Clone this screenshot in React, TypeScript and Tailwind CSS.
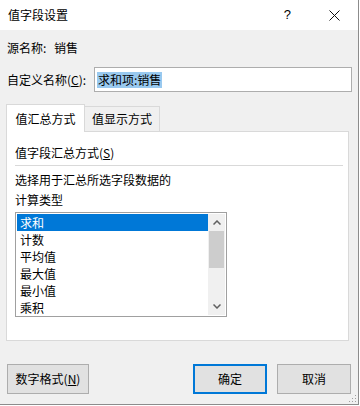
import React from "react";

const items = ["求和", "计数", "平均值", "最大值", "最小值", "乘积"];

export default function App() {
  return (
    <div className="w-[360px] h-[406px] bg-white text-[12px] leading-[16px] text-black font-['Microsoft_YaHei','Noto_Sans_CJK_SC',sans-serif]">
      <div className="relative flex h-[405px] w-[359px] flex-col border-r border-b border-[#8c8c8c] bg-[#f0f0f0]">
        {/* title bar */}
        <div className="flex h-[30px] items-center bg-white pl-[8px]">
          <span className="text-[12px]">值字段设置</span>
          <span className="ml-auto mr-[38px] font-['Liberation_Sans',sans-serif] text-[13px]">?</span>
          <svg width="11" height="11" viewBox="0 0 11 11" className="mr-[18px]">
            <path d="M0.5 0.5 L10.5 10.5 M10.5 0.5 L0.5 10.5" stroke="#111" strokeWidth="1" />
          </svg>
        </div>

        <div className="px-[6px]">
          {/* source name */}
          <div className="mt-[10px] flex h-[16px] pl-[1px]">
            <span className="w-[47px]">源名称:</span>
            <span>销售</span>
          </div>

          {/* custom name */}
          <div className="mt-[11px] flex h-[25px] items-center pl-[1px]">
            <span className="w-[87px]">
              自定义名称(<span className="underline">C</span>):
            </span>
            <div className="flex h-[25px] w-[258px] items-center border border-[#adadad] bg-white pl-[2px]">
              <span className="bg-[#99c9ef] px-[1px]">求和项:销售</span>
            </div>
          </div>

          {/* tabs */}
          <div className="mt-[12px] flex h-[27px] items-end">
            <div className="relative z-10 -mb-px flex h-[28px] w-[79px] items-center justify-center border border-b-0 border-[#d9d9d9] bg-white">
              值汇总方式
            </div>
            <div className="flex h-[25px] w-[75px] items-center justify-center border border-l-0 border-b-0 border-[#d9d9d9] bg-[#f0f0f0]">
              值显示方式
            </div>
          </div>

          {/* panel */}
          <div className="h-[210px] w-[343px] border border-[#d9d9d9] bg-white pl-[8px] pr-[5px]">
            <div className="mt-[13px] h-[16px]">
              值字段汇总方式(<span className="underline">S</span>)
            </div>
            <div className="mt-[4px] h-px bg-[#d9d9d9]" />
            <div className="mt-[6px] h-[16px]">选择用于汇总所选字段数据的</div>
            <div className="mt-[4px] h-[16px]">计算类型</div>

            {/* list box */}
            <div className="mt-[4px] flex h-[105px] w-[212px] border border-[#a0a0a0] bg-white p-px">
              <div className="flex-1 overflow-hidden">
                {items.map((it, i) => (
                  <div
                    key={it}
                    className={
                      i === 0
                        ? "h-[17px] bg-[#0078d7] pl-[3px] leading-[17px] text-white"
                        : "h-[17px] pl-[3px] leading-[17px]"
                    }
                  >
                    {it}
                  </div>
                ))}
              </div>
              <div className="flex w-[17px] flex-col bg-[#f0f0f0]">
                <div className="flex h-[17px] items-center justify-center">
                  <svg width="8" height="5" viewBox="0 0 8 5">
                    <path d="M0.5 4.5 L4 1 L7.5 4.5" stroke="#606060" strokeWidth="1.5" fill="none" />
                  </svg>
                </div>
                <div className="mx-[1px] h-[37px] bg-[#cdcdcd]" />
                <div className="flex-1" />
                <div className="flex h-[17px] items-center justify-center">
                  <svg width="8" height="5" viewBox="0 0 8 5">
                    <path d="M0.5 0.5 L4 4 L7.5 0.5" stroke="#606060" strokeWidth="1.5" fill="none" />
                  </svg>
                </div>
              </div>
            </div>
          </div>

          {/* buttons */}
          <div className="mt-[23px] flex h-[30px] pl-[1px]">
            <button className="h-[30px] w-[82px] border border-[#adadad] bg-[#e1e1e1]">
              数字格式(<span className="underline">N</span>)
            </button>
            <button className="ml-auto h-[30px] w-[74px] border-2 border-[#0078d7] bg-[#e1e1e1]">
              确定
            </button>
            <button className="ml-[10px] mr-[1px] h-[30px] w-[74px] border border-[#adadad] bg-[#e1e1e1]">
              取消
            </button>
          </div>
        </div>

        {/* resize grip */}
        <svg width="9" height="9" viewBox="0 0 9 9" className="absolute right-[1px] bottom-[1px]">
          <rect x="7" y="1" width="1" height="1" fill="#a0a0a0" />
          <rect x="4" y="4" width="1" height="1" fill="#a0a0a0" />
          <rect x="7" y="4" width="1" height="1" fill="#a0a0a0" />
          <rect x="1" y="7" width="1" height="1" fill="#a0a0a0" />
          <rect x="4" y="7" width="1" height="1" fill="#a0a0a0" />
          <rect x="7" y="7" width="1" height="1" fill="#a0a0a0" />
        </svg>
      </div>
    </div>
  );
}
